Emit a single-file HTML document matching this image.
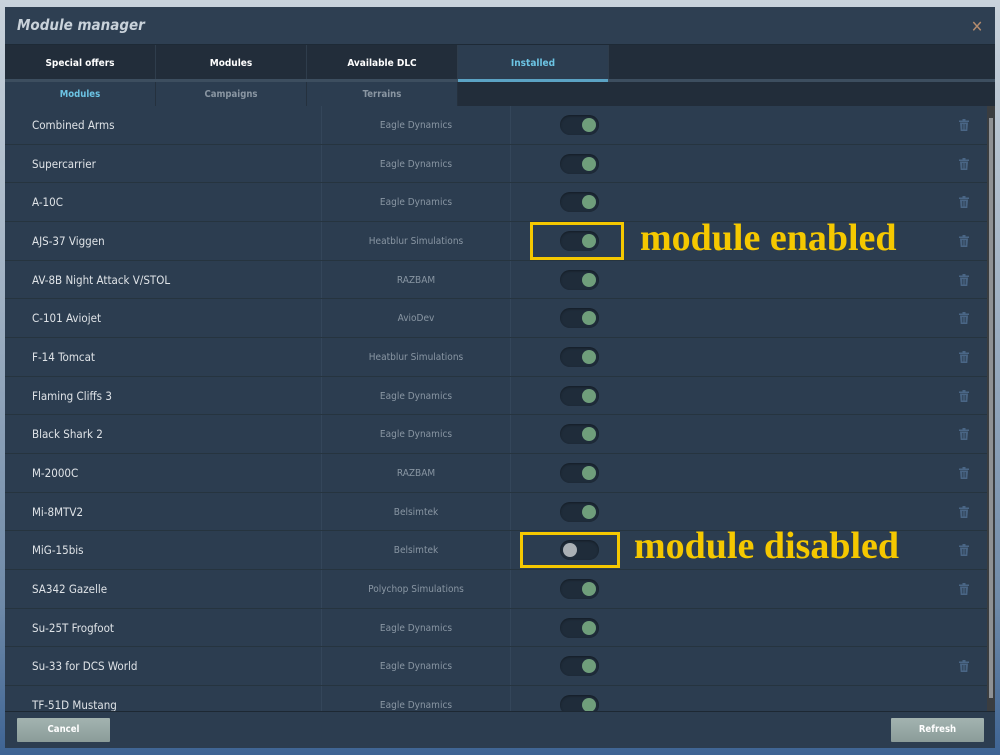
<!DOCTYPE html>
<html><head><meta charset="utf-8"><style>
*{margin:0;padding:0;box-sizing:border-box}
body{width:1000px;height:755px;overflow:hidden;position:relative;font-family:"DejaVu Sans Condensed","DejaVu Sans","Liberation Sans",sans-serif;background:linear-gradient(180deg,#c9d3dc 0%,#9fb0c2 40%,#6f8aa8 80%,#3e6494 100%)}
#win{position:absolute;left:5px;top:7px;width:990px;height:741px;background:#2c3d50}
#title{position:absolute;left:0;top:0;width:990px;height:38px;background:#2e3f52;border-bottom:1px solid #1e2a36}
#title span{position:absolute;left:12px;top:9px;font-size:15px;font-style:italic;font-weight:bold;color:#c9d2da}
#close{position:absolute;right:12px;top:10px;color:#b48c6e;font-size:16px}
#tabs{position:absolute;left:0;top:38px;width:990px;height:35px;background:#222d3a}
.tab{position:absolute;top:0;height:35px;width:151px;border-right:1px solid #2f3d4c;color:#fff;font-size:10px;font-weight:bold;text-align:center;line-height:38px}
#stripe{position:absolute;left:0;top:72px;width:990px;height:3px;background:#3d4e5f}
#ul{position:absolute;left:453px;top:72px;width:150px;height:3px;background:#5ba3c4}
#sub{position:absolute;left:0;top:75px;width:990px;height:24px;background:#222d3a}
.st{position:absolute;top:0;height:24px;width:151px;background:#2c3d50;border-right:1px solid #25313e;color:#8a96a2;font-size:9.5px;font-weight:bold;text-align:center;line-height:26px}
.row{position:absolute;left:0;width:982px;height:38.67px;border-bottom:1px solid #26343f}
.n{position:absolute;left:27px;top:12px;font-size:11.5px;color:#dfe3e7}
.c{position:absolute;left:316px;width:190px;top:0;height:100%;border-left:1px solid #34465a;border-right:1px solid #34465a;text-align:center;font-size:10px;color:#8996a3;line-height:40px}
.tg{position:absolute;left:555px;top:9px;width:39px;height:20px;border-radius:10px;background:#1f2c3a;box-shadow:inset 0 1px 2px #141c25}
.tg i{position:absolute;right:3px;top:3px;width:14px;height:14px;border-radius:7px;background:#6f9e7b}
.tg.off i{left:3px;right:auto;background:#aab0b5}
.tr{position:absolute;left:954px;top:13px;width:10px;height:12px}
#list{position:absolute;left:0;top:99px;width:982px;height:605px;overflow:hidden}
#sb{position:absolute;left:982px;top:99px;width:8px;height:605px;background:#3a3d40}
#sb i{position:absolute;left:2px;top:12px;width:4px;height:580px;background:#8e9194}
#foot{position:absolute;left:0;top:704px;width:990px;height:37px;background:#2c3d50;border-top:1px solid #1d2833}
.btn{position:absolute;top:6px;height:24px;background:linear-gradient(#a3b3b0,#8b9c99);color:#fff;font-size:9.5px;font-weight:bold;text-align:center;line-height:24px;border-radius:1px}
.box{position:absolute;border:3px solid #f5c800}
.ann{position:absolute;font-family:"Liberation Serif","DejaVu Serif",serif;font-weight:bold;font-size:38px;color:#f5c800;white-space:nowrap}
</style></head><body>
<div id="win">
<div id="title"><span>Module manager</span><div id="close">✕</div></div>
<div id="tabs">
<div class="tab" style="left:0">Special offers</div>
<div class="tab" style="left:151px">Modules</div>
<div class="tab" style="left:302px">Available DLC</div>
<div class="tab" style="left:453px;color:#6cc4e4;background:#2c3d50">Installed</div>
</div>
<div id="stripe"></div><div id="ul"></div>
<div id="sub">
<div class="st" style="left:0;color:#6cc4e4">Modules</div>
<div class="st" style="left:151px">Campaigns</div>
<div class="st" style="left:302px">Terrains</div>
</div>
<div id="list">
</div>
<div id="sb"><i></i></div>
<div id="foot">
<div class="btn" style="left:12px;width:93px">Cancel</div>
<div class="btn" style="left:886px;width:93px">Refresh</div>
</div>
</div>
<div class="box" style="left:530px;top:222px;width:94px;height:38px"></div>
<div class="ann" style="left:640px;top:216px">module enabled</div>
<div class="box" style="left:520px;top:532px;width:100px;height:36px"></div>
<div class="ann" style="left:634px;top:524px">module disabled</div>
<script>
var d=[["Combined Arms","Eagle Dynamics"],["Supercarrier","Eagle Dynamics"],["A-10C","Eagle Dynamics"],["AJS-37 Viggen","Heatblur Simulations"],["AV-8B Night Attack V/STOL","RAZBAM"],["C-101 Aviojet","AvioDev"],["F-14 Tomcat","Heatblur Simulations"],["Flaming Cliffs 3","Eagle Dynamics"],["Black Shark 2","Eagle Dynamics"],["M-2000C","RAZBAM"],["Mi-8MTV2","Belsimtek"],["MiG-15bis","Belsimtek"],["SA342 Gazelle","Polychop Simulations"],["Su-25T Frogfoot","Eagle Dynamics"],["Su-33 for DCS World","Eagle Dynamics"],["TF-51D Mustang","Eagle Dynamics"]];
var h="",trash='<svg class="tr" viewBox="0 0 10 12"><rect x="0" y="1.5" width="10" height="1.5" fill="#4a6686"/><rect x="3.5" y="0" width="3" height="1.5" fill="#4a6686"/><path d="M1 3.5h8l-.7 8.5H1.7z" fill="#4a6686"/><path d="M3.3 5v5.5M5 5v5.5M6.7 5v5.5" stroke="#2c3d50" stroke-width=".7"/></svg>';
d.forEach(function(r,i){h+='<div class="row" style="top:'+(i*38.67)+'px"><div class="n">'+r[0]+'</div><div class="c">'+r[1]+'</div><div class="tg'+(i==11?' off':'')+'"><i></i></div>'+(i==13||i==15?'':trash)+'</div>';});
document.getElementById("list").innerHTML=h;
</script>
</body></html>
